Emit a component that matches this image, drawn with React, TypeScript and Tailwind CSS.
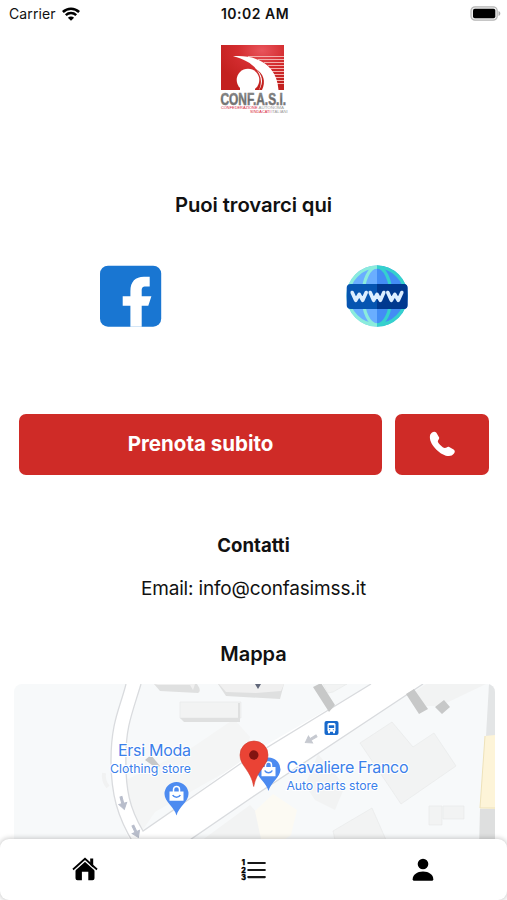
import React from "react";

function Wifi() {
  return (
    <svg className="h-[14px] w-[18px]" viewBox="0 0 18 14" fill="none" stroke="#000">
      <path d="M.9 5C5.5.7 12.5.7 17.1 5" strokeWidth="2.6" />
      <path d="M3.8 8.2c3-2.8 7.4-2.8 10.4 0" strokeWidth="2.5" />
      <path d="M9 13.8 5.9 10.7c1.8-1.6 4.4-1.6 6.2 0Z" fill="#000" stroke="none" />
    </svg>
  );
}

function Battery() {
  return (
    <svg className="h-[15px] w-[31px]" viewBox="0 0 31 15">
      <rect x="1" y=".8" width="26.2" height="13.4" rx="4" fill="#eee" stroke="#b5b5b5" strokeWidth="1.2" />
      <rect x="3" y="2.8" width="22.3" height="9.4" rx="1.8" />
      <path d="M28.5 5c2.4.8 2.4 4.2 0 5Z" fill="#aaa" />
    </svg>
  );
}

function Logo() {
  return (
    <svg className="h-[72px] w-[70px]" viewBox="219 43 70 72">
      <defs>
        <radialGradient id="red" cx=".65" cy=".12" r=".75">
          <stop offset="0" stopColor="#e9555c" />
          <stop offset=".5" stopColor="#d42d30" />
          <stop offset="1" stopColor="#c3211f" />
        </radialGradient>
        <linearGradient id="steel" x1="0" y1="0" x2="0" y2="1">
          <stop offset="0" stopColor="#999" />
          <stop offset=".55" stopColor="#666" />
          <stop offset="1" stopColor="#8a8a8a" />
        </linearGradient>
      </defs>
      <rect x="221" y="45" width="63" height="45" fill="url(#red)" />
      <path
        d="M248 56.5h36M258 59.5h26M264 62.5h20M268 65.5h16M270 68.5h14M272 71.5h12M273 74.5h11M275 77.5h9M276 80.5h8M277 83.5h7"
        stroke="#f3b0ad"
        strokeWidth="1"
      />
      <path d="M233 56.3C259 54.5 277 66 278.5 90H259C265 77 257 62 233 56.3Z" fill="#fff" />
      <circle cx="248" cy="80" r="11.3" fill="#fff" />
      <path d="M240 85h15v5H240Z" fill="#fff" />
      <path d="M255 68.5c8 6 9 14 4 21.5h3c4-8 2-17-7-21.5Z" fill="#c3211f" />
      <text x="220.5" y="104.6" textLength="65.5" lengthAdjust="spacingAndGlyphs" fontFamily="Liberation Sans, Arial, sans-serif" fontWeight="700" fontSize="16" fill="url(#steel)" stroke="#777" strokeWidth=".5">CONF.A.S.I.</text>
      <text x="221" y="108.9" textLength="36.5" lengthAdjust="spacingAndGlyphs" fontFamily="Liberation Sans, Arial, sans-serif" fontSize="4" fill="#d8233a">CONFEDERAZIONE</text>
      <text x="258.5" y="108.9" textLength="25.5" lengthAdjust="spacingAndGlyphs" fontFamily="Liberation Sans, Arial, sans-serif" fontSize="3.6" fill="#999">AUTONOMA</text>
      <text x="250" y="112.5" textLength="20.5" lengthAdjust="spacingAndGlyphs" fontFamily="Liberation Sans, Arial, sans-serif" fontSize="4" fill="#d8233a">SINDACATI</text>
      <text x="271.2" y="112.5" textLength="16.5" lengthAdjust="spacingAndGlyphs" fontFamily="Liberation Sans, Arial, sans-serif" fontSize="3.6" fill="#999">ITALIANI</text>
    </svg>
  );
}

function Facebook() {
  return (
    <svg className="h-[62px] w-[62px]" viewBox="0 0 62 62">
      <rect x="0" y=".7" width="61.2" height="61" rx="8" fill="#1976d2" />
      <path d="M30.4 61.7V40.7H22.7V31.3h7.7V26c0-9.4 5-14.3 13.5-14.3h5.8v9.9h-4c-3.2 0-4 1.4-4 4.2v5.5h9.7L48.3 40.7h-6.6v21Z" fill="#fff" />
    </svg>
  );
}

function Web() {
  return (
    <svg className="h-[62px] w-[62px]" viewBox="0 0 62 62">
      <clipPath id="leftHalf"><path d="M0 0h31v62H0Z" /></clipPath>
      <clipPath id="rightHalf"><path d="M31 0h31v62H31Z" /></clipPath>
      <g clipPath="url(#leftHalf)">
        <circle cx="31" cy="31" r="30.5" fill="#6aaeff" />
        <g fill="none" stroke="#8becdc" strokeWidth="3.2">
          <circle cx="31" cy="31" r="29" />
          <ellipse cx="31" cy="31" rx="14" ry="29" />
        </g>
      </g>
      <g clipPath="url(#rightHalf)">
        <circle cx="31" cy="31" r="30.5" fill="#438df4" />
        <g fill="none" stroke="#35d1cd" strokeWidth="3.2">
          <circle cx="31" cy="31" r="29" />
          <ellipse cx="31" cy="31" rx="14" ry="29" />
        </g>
      </g>
      <rect x=".7" y="18.9" width="60.8" height="25" rx="4" fill="#0655b1" />
      <path d="M31 18.9h26.5q4 0 4 4v17q0 4-4 4H31Z" fill="#00398f" />
      <g fill="none" stroke="#dceeff" strokeWidth="3.6" strokeLinejoin="round" strokeLinecap="round">
        <path d="m6.2 27.5 3.5 7.8 3.5-6 3.5 6 3.5-7.8" />
        <path d="m24.2 27.5 3.4 7.8 3.4-6 3.4 6 3.4-7.8" />
        <path d="m41.8 27.5 3.5 7.8 3.5-6 3.5 6 3.5-7.8" />
      </g>
    </svg>
  );
}

function StorePin({ x, y }: { x: number; y: number }) {
  return (
    <g transform={`translate(${x} ${y})`}>
      <path d="M0 33.5C-2 25-12 20-12 12a12 12 0 0 1 24 0C12 20 2 25 0 33.5Z" fill="#4d8bf0" />
      <path d="M-7 9.5H7v9.3H-7Z" fill="#fff" />
      <path d="M-3 10V7.5a3 3 0 0 1 6 0V10" fill="none" stroke="#fff" strokeWidth="1.5" />
      <path d="M-3.8 13c1.5 3 6.1 3 7.6 0" fill="none" stroke="#4d8bf0" strokeWidth="1.6" />
    </g>
  );
}

function Map() {
  return (
    <svg className="h-full w-full" viewBox="14 684 481 165" fontFamily="Inter, sans-serif">
      <rect x="14" y="684" width="481" height="165" fill="#f7f9fa" />
      <path d="M142 831 132 810 126 780 190 749 234 719 250 737 243 762 155 812Z" fill="#f4f5f5" />
      <path d="M126 684C120 708 111 722 111 760 111 793 117 817 134 848H184L191 838 254 795 423 684H371L254 752 143 831C130 809 125 790 126 755 126 727 132 714 141 684Z" fill="#fff" />
      <g fill="#f2f3f3" stroke="#e8eaea" strokeWidth=".7">
        <path d="M180 702h61v16h-61Z" />
        <path d="m323 684 24 0-14 8-5 1Z" />
        <path d="m360 743 32-21 21 25 21-14 22 33-55 38Z" />
        <path d="m318 754 27 32-10 24-20-10-10-15Z" stroke="none" />
        <path d="m333 831 39-23 18 41h-53Z" />
        <path d="M429 806h13v19h-13ZM443 806h21v13h-21Z" />
        <path d="m414 692 12-8h60l-46 22h-14Z" stroke="none" />
        <path d="m190 849 60-44 20 22 6 22Z" stroke="none" />
      </g>
      <g fill="none" stroke="#d9dbde" strokeWidth="1.3">
        <path d="M126 684C120 708 111 722 111 760 111 793 117 817 134 844" />
        <path d="M141 684C132 714 126 727 126 755 125 790 130 809 143 831L240 764 371 684" />
        <path d="m184 844 70-48 169-112" />
      </g>
      <path d="M104 773q-1 8 4 14" fill="none" stroke="#f1f2f2" strokeWidth="4" />
      <g fill="#dfe0e0">
        <path d="m154 684 6 7 38 2q4-2-1-9ZM218 684l8 12 54 3 4-15Z" />
        <path d="m180 718 4 4h56v-19h-2v15Z" />
      </g>
      <path d="m154 684 4 1h32l3 5 2-6ZM219 684l7 8 30 1 25-2 3-7Z" fill="#f0f0f0" />
      <path d="m313 687 8-4 14 22-6 7ZM406 694l8-5 14 20-9 5ZM435 707l9-7 6 7-8 7Z" fill="#c7c8c8" />
      <path d="m145 760 6-5 9 11-4 2Z" fill="#c7c8c8" />
      <path d="m255 811 18-17 24 16-6 25-14 10-16-6Z" fill="#fcfaf3" />
      <path d="m489 684 6 0v52h-9Z" fill="#e3e5e6" />
      <path d="m485 736 10-1v74l-15-1Z" fill="#fdf4d8" />
      <path d="m485 736-5 72h15" fill="none" stroke="#eee2b9" />
      <path d="M480 809h15v40h-16Z" fill="#dedfdf" />
      <path d="M0 0v7h-3l4 6 4-6H2V0Z" transform="translate(120 797) rotate(-15)" fill="#b8bdcb" stroke="#b8bdcb" strokeWidth="1" />
      <path d="M0 0v7h-3l4 6 4-6H2V0Z" transform="translate(132 826) rotate(-25)" fill="#b8bdcb" stroke="#b8bdcb" strokeWidth="1" />
      <path d="M0 0v7h-3l4 6 4-6H2V0Z" transform="translate(316 735) rotate(59)" fill="#c6c9d0" stroke="#c6c9d0" strokeWidth="1" />
      <path d="M255 684h6l-3 5Z" fill="#606779" />
      <g transform="translate(324.5 721)">
        <rect width="14" height="14" rx="2" fill="#1769cc" />
        <rect x="3" y="2" width="8" height="8.8" rx="1.5" fill="#fff" />
        <path d="M4.3 4.3h5.4v2.7H4.3Z" fill="#1769cc" />
        <path d="M3.5 10h2v2.3h-2ZM8.5 10h2v2.3h-2Z" fill="#fff" />
        <path d="M4.7 8.7h1M8.3 8.7h1" stroke="#1769cc" />
      </g>
      <StorePin x={176.5} y={782} />
      <StorePin x={268.5} y={757.5} />
      <path d="M253.7 786.5C251 770 240 766 240 755a14 14 0 0 1 28 0c0 11-11.5 15-14.3 31.5Z" fill="#ea4335" stroke="#d13a2e" strokeWidth=".6" />
      <circle cx="253.8" cy="755" r="4.7" fill="#811411" />
      <g fill="#3b80ea" stroke="#fff" strokeWidth="2" paintOrder="stroke">
        <text x="118" y="756" fontSize="16" textLength="73">Ersi Moda</text>
        <text x="110" y="773" fontSize="12.3" textLength="81">Clothing store</text>
        <text x="286.5" y="773" fontSize="16" textLength="122">Cavaliere Franco</text>
        <text x="286.5" y="790" fontSize="12.3" textLength="91.5">Auto parts store</text>
      </g>
    </svg>
  );
}

function Phone() {
  return (
    <svg className="h-[26px] w-[26px]" viewBox="0 0 26 26" fill="#fff">
      <path d="M1.3 3.6C2.6.9 5.7-.2 7.4 1.8L10 6.2c.9 1.8-1.1 2.7-1.2 4.1.2 2.1 4.8 6.6 7 6.8 1.7.1 2.5-1.9 4.4-1.1l4.4 2.5c1.6 1 1.4 2.8.4 4.1C18.5 31.6-2.4 14 1.3 3.6Z" />
    </svg>
  );
}

function Home() {
  return (
    <svg className="h-[25px] w-[26px]" viewBox="0 0 26 25">
      <path d="M18.2 1.5h3v9h-3Z" />
      <path d="M3.5 12.4 13 4l9.5 8.4v8.9q0 2-2 2h-4.2v-8.5H9.9v8.5H5.5q-2 0-2-2Z" />
      <path d="m2.4 13.6 10.6-9.5 10.6 9.5" fill="none" stroke="#fff" strokeWidth="1.2" />
      <path d="M1 12.5 13 1.8l12 10.7" fill="none" stroke="#000" strokeWidth="1.8" />
    </svg>
  );
}

function NumberedList() {
  return (
    <svg className="h-[22px] w-[25px]" viewBox="0 0 25 22">
      <g fontFamily="Inter, sans-serif" fontSize="7" fontWeight="900" stroke="#000" strokeWidth=".3">
        <text x=".8" y="6.4">1</text>
        <text x=".2" y="13.8">2</text>
        <text x=".2" y="21">3</text>
      </g>
      <path d="M7.3 4h16.5M7.3 11h16.5M7.3 18.1h16.5" stroke="#171717" strokeWidth="2.2" strokeLinecap="round" />
    </svg>
  );
}

function Person() {
  return (
    <svg className="h-[24px] w-[22px]" viewBox="0 0 22 24">
      <circle cx="11" cy="6" r="5.3" />
      <path d="M.7 21.2C.7 16.7 5.2 13.5 11 13.5s10.3 3.2 10.3 7.7q0 1.6-1.5 1.6H2.2Q.7 22.8.7 21.2Z" />
    </svg>
  );
}

export default function App() {
  return (
    <div className="flex h-[900px] w-[507px] flex-col overflow-hidden bg-white font-['Inter',sans-serif] text-[#111]">
      <header className="grid h-[27px] shrink-0 grid-cols-3 items-center pr-[6px] pl-[9px] text-[14px]">
        <div className="flex items-center gap-[6px]">
          <span className="w-[47px] tracking-[0.1px]">Carrier</span>
          <Wifi />
        </div>
        <span className="text-center text-[14px] font-semibold tracking-[0.5px] whitespace-nowrap">10:02 AM</span>
        <div className="flex justify-end"><Battery /></div>
      </header>
      <div className="mt-[16px] flex h-[72px] shrink-0 justify-center"><Logo /></div>
      <h1 className="mt-[75px] h-[30px] shrink-0 text-center text-[20.3px] leading-[30px] font-semibold tracking-[-0.1px]">Puoi trovarci qui</h1>
      <div className="mt-[45px] flex shrink-0 justify-between pr-[99px] pl-[100px]">
        <a><Facebook /></a>
        <a><Web /></a>
      </div>
      <div className="mt-[86.5px] flex h-[61px] shrink-0 gap-[13.5px] pr-[18px] pl-[19.3px]">
        <button className="w-[362.5px] rounded-[7px] bg-[#cf2b27] pt-[1px] text-[20.5px] font-bold text-white">Prenota subito</button>
        <button className="flex flex-1 items-center justify-center rounded-[7px] bg-[#cf2b27]"><Phone /></button>
      </div>
      <h2 className="mt-[55.5px] h-[30px] shrink-0 text-center text-[18.6px] leading-[30px] font-bold">Contatti</h2>
      <p className="mt-[14px] h-[30px] shrink-0 text-center text-[19px] leading-[30px] tracking-[-0.17px]">Email: info@confasimss.it</p>
      <h2 className="mt-[35px] h-[30px] shrink-0 text-center text-[20px] leading-[30px] font-semibold">Mappa</h2>
      <div className="mt-[15px] ml-[14px] h-[165px] w-[481px] shrink-0 overflow-hidden rounded-[8px]"><Map /></div>
      <nav className="z-10 -mt-[10px] grid h-[61px] shrink-0 grid-cols-3 rounded-[9px] bg-white shadow-[0_0_5px_1px_rgba(0,0,0,0.2)]">
        <a className="flex items-center justify-center"><Home /></a>
        <a className="flex items-center justify-center pt-[1px]"><NumberedList /></a>
        <a className="flex items-center justify-center pt-[1px]"><Person /></a>
      </nav>
    </div>
  );
}
